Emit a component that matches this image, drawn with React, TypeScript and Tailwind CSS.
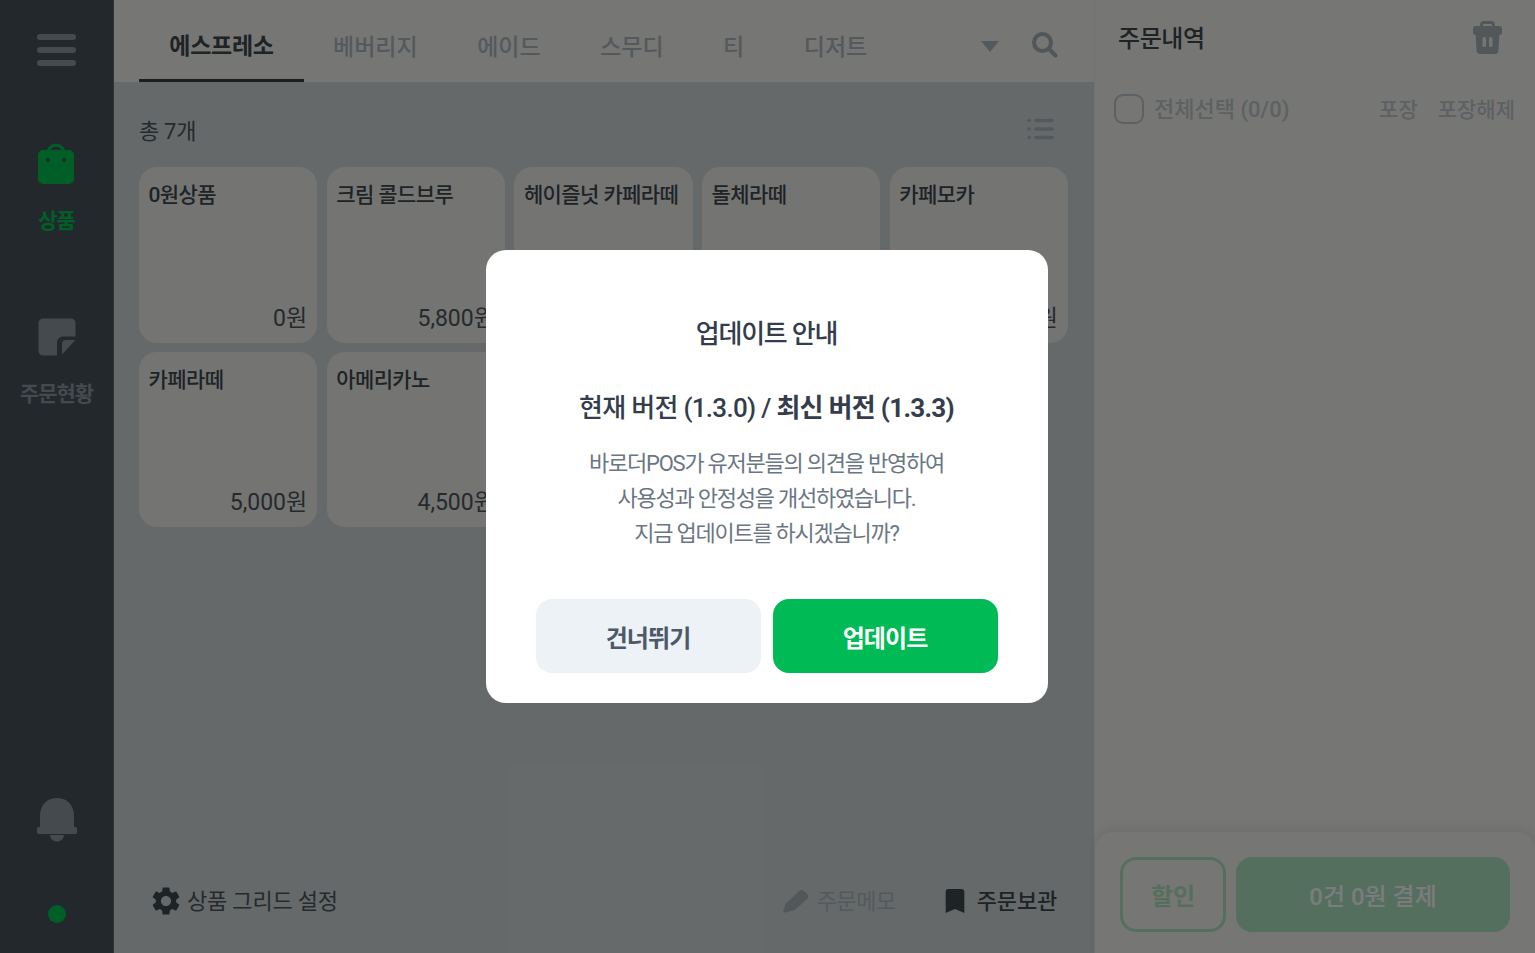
import { MdBookmark, MdSettings } from "react-icons/md";

const tabs = ["베버리지", "에이드", "스무디", "티", "디저트"];

const products = [
  { name: "0원상품", price: "0원" },
  { name: "크림 콜드브루", price: "5,800원" },
  { name: "헤이즐넛 카페라떼", price: "5,800원" },
  { name: "돌체라떼", price: "5,800원" },
  { name: "카페모카", price: "5,500원" },
  { name: "카페라떼", price: "5,000원" },
  { name: "아메리카노", price: "4,500원" },
];

function BagIcon() {
  return (
    <svg width="38" height="42" viewBox="1 0 38 42" fill="none">
      <path d="M11 14V10a8 8 0 0 1 16 0v4" stroke="#00bf4f" strokeWidth="3" />
      <path
        d="M6 7h26a5 5 0 0 1 5 5v24a5 5 0 0 1-5 5H6a5 5 0 0 1-5-5V12a5 5 0 0 1 5-5Z"
        fill="#00bf4f"
      />
      <circle cx="11" cy="17" r="2" fill="#44505a" />
      <circle cx="27" cy="17" r="2" fill="#44505a" />
    </svg>
  );
}

function NoteIcon() {
  return (
    <svg width="38" height="38" viewBox="0 0 38 38" fill="none">
      <path
        d="M5 0.500h28a4.500 4.500 0 0 1 4.500 4.500v13.500H25a6 6 0 0 0-6 6v13H5A4.500 4.500 0 0 1 0.500 33V5A4.500 4.500 0 0 1 5 0.500Z"
        fill="#8a949c"
      />
      <path d="M24 36.500V26a4 4 0 0 1 4-4h9.500L24 36.500Z" fill="#8a949c" />
    </svg>
  );
}

function BellIcon() {
  return (
    <svg width="40" height="44" viewBox="0 0 40 44" fill="#8a949c">
      <path d="M3 29V18C3 7 10 0 20 0s17 7 17 18v11h0.500a3.500 3.500 0 0 1 0 7H2.500a3.500 3.500 0 0 1 0-7H3Z" />
      <path d="M13 37h14c-.5 4-3 6.500-7 6.500S13.500 41 13 37Z" />
    </svg>
  );
}

function TrashIcon() {
  return (
    <svg width="29" height="34" viewBox="0 0 29 34" fill="#a4aeb5">
      <path d="M7 8V5a4 4 0 0 1 4-4h7a4 4 0 0 1 4 4v3h-3V5a1 1 0 0 0-1-1h-7a1 1 0 0 0-1 1v3H7Z" />
      <rect x="0" y="6" width="29" height="9" rx="3" />
      <path d="M2.500 12h24l-1 18a4 4 0 0 1-4 4h-14a4 4 0 0 1-4-4l-1-18Z" />
      <rect x="9.500" y="17" width="3.500" height="10" rx="1.500" fill="#ecece8" />
      <rect x="16" y="17" width="3.500" height="10" rx="1.500" fill="#ecece8" />
    </svg>
  );
}

function ListIcon() {
  return (
    <svg width="28" height="22" viewBox="0 0 28 22" fill="#a9b3ba">
      <circle cx="2" cy="2.500" r="1.800" />
      <circle cx="2" cy="11" r="1.800" />
      <circle cx="2" cy="19.500" r="1.800" />
      <rect x="7" y="0.750" width="20" height="3.500" rx="1.750" />
      <rect x="7" y="9.250" width="20" height="3.500" rx="1.750" />
      <rect x="7" y="17.750" width="20" height="3.500" rx="1.750" />
    </svg>
  );
}

function SearchIcon() {
  return (
    <svg width="26" height="26" viewBox="0 0 26 26" fill="none" stroke="#a2acb3" strokeWidth="4">
      <circle cx="10.500" cy="10.500" r="8.500" />
      <path d="M17 17l6.500 6.500" strokeLinecap="round" />
    </svg>
  );
}

function PencilIcon() {
  return (
    <svg width="26" height="24" viewBox="0 0 26 24" fill="#a4aeb5">
      <path d="M2 23.500a1.500 1.500 0 0 1-1.800-1.800L2.500 15 16 2.200a4 4 0 0 1 5.500 0l2.500 2.400a4 4 0 0 1 0 5.600L11 21.500 2 23.500Z" />
    </svg>
  );
}

export default function App() {
  return (
    <div className="relative flex h-screen w-screen overflow-hidden bg-[#ecece8] font-['Roboto','Noto_Sans_CJK_KR',sans-serif] text-[#3c464d]">
      <aside className="flex w-[114px] shrink-0 flex-col items-center border-r border-[#5a666e] bg-[#445058]">
        <div className="mt-[34px] flex w-[39px] flex-col gap-[7px]">
          <div className="h-[6px] rounded-full bg-[#8a949c]" />
          <div className="h-[6px] rounded-full bg-[#8a949c]" />
          <div className="h-[6px] rounded-full bg-[#8a949c]" />
        </div>
        <div className="mt-[77px] flex flex-col items-center">
          <BagIcon />
          <span className="mt-[21px] text-[21px] leading-[30px] font-bold tracking-[-1px] text-[#00bf4f]">상품</span>
        </div>
        <div className="mt-[82px] flex flex-col items-center">
          <NoteIcon />
          <span className="mt-[23px] text-[21px] leading-[30px] font-bold tracking-[-1px] text-[#8a949c]">주문현황</span>
        </div>
        <div className="mt-auto">
          <BellIcon />
        </div>
        <div className="mt-[63px] mb-[30px] h-[18px] w-[18px] rounded-full bg-[#00bf4f]" />
      </aside>

      <main className="flex min-w-0 flex-1 flex-col bg-[#cdd3d5]">
        <nav className="flex h-[82px] shrink-0 items-stretch bg-[#ecece8] pl-[25px] pr-[36px]">
          <div className="flex w-[165px] items-center justify-center border-b-[3px] border-[#343c42] pt-[15px] text-[23px] font-bold tracking-[-0.3px] text-[#3c464d]">
            에스프레소
          </div>
          <div className="ml-[29px] flex items-center gap-[59.500px] pt-[15px] text-[23px] font-medium text-[#a9b3ba]">
            {tabs.map((tab) => (
              <span key={tab}>{tab}</span>
            ))}
          </div>
          <div className="ml-auto flex items-center pt-[11px]">
            <div className="h-0 w-0 border-x-[9px] border-t-[11px] border-x-transparent border-t-[#a9b3ba]" />
            <div className="ml-[33px] -mt-[4px]">
              <SearchIcon />
            </div>
          </div>
        </nav>

        <div className="flex flex-1 flex-col px-[25px]">
          <div className="mt-[35px] flex items-center justify-between pr-[14px]">
            <span className="text-[22px] leading-[30px] tracking-[-0.3px] text-[#4a555d]">총 7개</span>
            <div className="mb-[6px]">
              <ListIcon />
            </div>
          </div>
          <div className="mt-[20px] grid w-[929px] grid-cols-5 gap-x-[9.5px] gap-y-[9px]">
            {products.map((p) => (
              <div key={p.name} className="flex h-[175.5px] flex-col justify-between rounded-[18px] bg-[#e8e8e4] pl-[9.5px] pr-[10px] pt-[13px] pb-[9px]">
                <span className="text-[21px] leading-[30px] font-medium tracking-[-0.6px] text-[#3c464d]">{p.name}</span>
                <span className="text-right text-[23px] leading-[30px] text-[#4a555d]">{p.price}</span>
              </div>
            ))}
          </div>
          <div className="mt-auto mb-[35px] flex items-center justify-between pl-[10px] pr-[12px] text-[22px] leading-[32px] tracking-[-0.2px]">
            <div className="flex items-center gap-[4px] text-[#4a555d]">
              <MdSettings size={34} className="text-[#3c464d]" />
              <span className="pt-[2px]">상품 그리드 설정</span>
            </div>
            <div className="flex items-center">
              <PencilIcon />
              <span className="ml-[8px] pt-[2px] tracking-[-0.5px] text-[#a9b3ba]">주문메모</span>
              <MdBookmark size={32} className="ml-[43px] text-[#3c464d]" />
              <span className="ml-[6px] pt-[2px] font-medium text-[#3c464d]">주문보관</span>
            </div>
          </div>
        </div>
      </main>

      <section className="relative flex w-[441px] shrink-0 flex-col border-l border-[#e2e2de] bg-[#ecece8]">
        <header className="flex items-start justify-between pl-[23px] pr-[33px] pt-[20px]">
          <span className="mt-[1px] text-[24px] leading-[36px] font-medium tracking-[-0.4px] text-[#3c464d]">주문내역</span>
          <TrashIcon />
        </header>
        <div className="mt-[35px] flex items-center pl-[19px] pr-[20px]">
          <div className="h-[30px] w-[30px] rounded-[9px] border-2 border-[#b8c2c9]" />
          <span className="ml-[10px] pt-[2px] text-[22px] leading-[32px] font-medium text-[#b8c2c9]">전체선택 (0/0)</span>
          <span className="ml-auto pt-[2px] text-[21px] leading-[32px] font-medium text-[#b8c2c9]">포장</span>
          <span className="ml-[20px] pt-[2px] text-[21px] leading-[32px] font-medium text-[#b8c2c9]">포장해제</span>
        </div>
        <div className="mt-auto flex h-[121px] gap-[10px] rounded-t-[18px] bg-[#ecece8] pl-[25px] pr-[25px] pt-[25px] shadow-[0_-2px_12px_rgba(0,0,0,0.08)]">
          <button className="h-[75px] w-[106px] rounded-[16px] border-[3px] border-[#aadfbf] pt-[4px] text-[24px] font-bold text-[#aadfbf]">할인</button>
          <button className="h-[75px] flex-1 rounded-[16px] bg-[#aadfbf] pt-[4px] text-[24px] font-medium text-[#f4faf6]">0건 0원 결제</button>
        </div>
      </section>

      <div className="absolute inset-0 flex items-center justify-center bg-black/50 pr-[2px]">
        <div className="flex h-[453px] w-[562px] flex-col items-center rounded-[20px] bg-white px-[50px] pt-[64px]">
          <h2 className="text-[26px] leading-[40px] font-medium tracking-[-1.2px] text-[#333d4b]">업데이트 안내</h2>
          <p className="mt-[34px] text-[26px] leading-[40px] font-medium tracking-[-0.7px] text-[#333d4b]">
            현재 버전 (1.3.0) / <span className="font-bold">최신 버전 (1.3.3)</span>
          </p>
          <p className="mt-[18px] text-center text-[22px] leading-[35px] tracking-[-1.25px] text-[#6b7684]">
            바로더POS가 유저분들의 의견을 반영하여
            <br />
            사용성과 안정성을 개선하였습니다.
            <br />
            지금 업데이트를 하시겠습니까?
          </p>
          <div className="mt-[48px] flex w-full gap-[12px]">
            <button className="h-[74px] flex-1 rounded-[16px] bg-[#edf2f6] pt-[6px] text-[24px] font-bold tracking-[-0.9px] text-[#4e5968]">건너뛰기</button>
            <button className="h-[74px] flex-1 rounded-[16px] bg-[#00bb55] pt-[6px] text-[24px] font-bold tracking-[-0.9px] text-white">업데이트</button>
          </div>
        </div>
      </div>
    </div>
  );
}
